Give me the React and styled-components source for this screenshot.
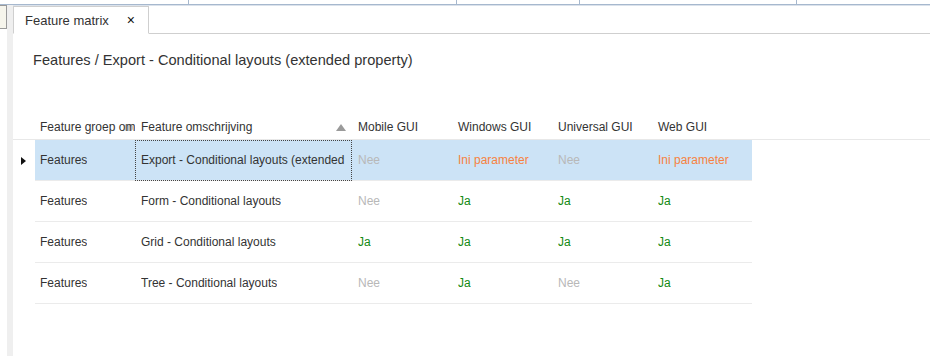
import styled, { createGlobalStyle } from 'styled-components';

const GlobalStyle = createGlobalStyle`
  body {
    margin: 0;
    background: #fff;
    font-family: "Liberation Sans", Arial, sans-serif;
    color: #333;
  }
`;

const Page = styled.div`
  width: 930px;
  height: 356px;
  overflow: hidden;
  display: flex;
  flex-direction: column;
`;

const TopStrip = styled.div`
  height: 4px;
  display: flex;
  border-bottom: 1px solid #a6b8ce;
  box-shadow: 0 1px 0 #dbe2eb;
`;

const StripSegment = styled.div`
  width: ${(props) => props.w}px;
  border-right: 1px solid #a6b8ce;
  flex: none;
`;

const Body = styled.div`
  flex: 1;
  display: flex;
  min-height: 0;
`;

const Gutter = styled.div`
  width: 7px;
  flex: none;
`;

const SideStub = styled.div`
  height: 24px;
  box-sizing: border-box;
  border: 1px solid #9a9a9a;
  border-left: none;
  background: #f6f5ec;
`;

const GreyRail = styled.div`
  width: 6px;
  flex: none;
  background: #efefef;
`;

const Content = styled.div`
  flex: 1;
  display: flex;
  flex-direction: column;
  min-width: 0;
`;

const TabBar = styled.div`
  height: 29px;
  display: flex;
  align-items: flex-end;
  border-bottom: 1px solid #cfcfcf;
  box-sizing: border-box;
  padding-top: 2px;
`;

const Tab = styled.div`
  height: 28px;
  box-sizing: border-box;
  width: 136px;
  margin-bottom: -1px;
  border: 1px solid #cfcfcf;
  border-bottom: 1px solid #fff;
  background: #fff;
  display: flex;
  align-items: center;
  padding-left: 11px;
  font-size: 13px;
  color: #333;
`;

const Close = styled.span`
  margin-left: 18px;
  font-size: 14px;
  color: #111;
`;

const Title = styled.h1`
  margin: 17px 0 0 20px;
  font-size: 14.6px;
  line-height: 18px;
  font-weight: normal;
  color: #333;
`;

const Grid = styled.div`
  margin-top: 46px;
  display: grid;
  grid-template-columns: 22px 100px 217px 100px 100px 100px 100px 1fr;
  font-size: 12px;
`;

const HeadCell = styled.div`
  position: relative;
  height: 24px;
  line-height: 24px;
  padding-left: ${(props) => (props.pad ? props.pad : 6)}px;
  border-bottom: 1px solid #e8e8e8;
  white-space: nowrap;
  overflow: hidden;
  color: #333;
`;

const ResizeMark = styled.span`
  position: absolute;
  right: 2px;
  top: 9px;
  width: 9px;
  height: 7px;
  border-radius: 3px;
  background: rgba(90, 90, 90, 0.35);
`;

const SortArrow = styled.span`
  position: absolute;
  right: 6px;
  top: 9px;
  width: 0;
  height: 0;
  border-left: 5px solid transparent;
  border-right: 5px solid transparent;
  border-bottom: 7px solid #9a9a9a;
`;

const Indicator = styled.div`
  height: 41px;
  display: flex;
  align-items: center;
  padding-left: 8px;
`;

const Filler = styled.div`
  height: 41px;
`;

const Cell = styled.div`
  height: 41px;
  box-sizing: border-box;
  display: flex;
  align-items: center;
  padding: 0 6px 0 ${(props) => (props.pad ? props.pad : 6)}px;
  border-bottom: 1px solid #ebebeb;
  background: ${(props) => (props.selected ? '#cce3f6' : '#fff')};
  outline: ${(props) => (props.focus ? '1px dotted #444' : 'none')};
  outline-offset: -1px;
  min-width: 0;
  color: ${(props) =>
    props.kind === 'Ja'
      ? '#138a13'
      : props.kind === 'Nee'
      ? '#b8b8b8'
      : props.kind === 'Ini parameter'
      ? '#f7823f'
      : '#333'};
`;

const CellText = styled.span`
  white-space: nowrap;
  overflow: hidden;
  min-width: 0;
`;

const columns = ['Mobile GUI', 'Windows GUI', 'Universal GUI', 'Web GUI'];

const rows = [
  { group: 'Features', name: 'Export - Conditional layouts (extended property)', values: ['Nee', 'Ini parameter', 'Nee', 'Ini parameter'], selected: true },
  { group: 'Features', name: 'Form - Conditional layouts', values: ['Nee', 'Ja', 'Ja', 'Ja'] },
  { group: 'Features', name: 'Grid - Conditional layouts', values: ['Ja', 'Ja', 'Ja', 'Ja'] },
  { group: 'Features', name: 'Tree - Conditional layouts', values: ['Nee', 'Ja', 'Nee', 'Ja'] },
];

const App = () => {
  return (
    <Page>
      <GlobalStyle />
      <TopStrip>
        <StripSegment w={188} />
        <StripSegment w={267} />
        <StripSegment w={122} />
        <StripSegment w={216} />
      </TopStrip>
      <Body>
        <Gutter>
          <SideStub />
        </Gutter>
        <GreyRail />
        <Content>
          <TabBar>
            <Tab>
              Feature matrix<Close>×</Close>
            </Tab>
          </TabBar>
          <Title>Features / Export - Conditional layouts (extended property)</Title>
          <Grid>
            <HeadCell />
            <HeadCell pad={5}>
              Feature groep omschrijving
              <ResizeMark />
            </HeadCell>
            <HeadCell>
              Feature omschrijving
              <SortArrow />
            </HeadCell>
            {columns.map((c) => (
              <HeadCell key={c}>{c}</HeadCell>
            ))}
            <HeadCell />

            {rows.map((r) => (
              <>
                <Indicator key={r.name + 'i'}>
                  {r.selected && (
                    <svg width="5" height="8" viewBox="0 0 5 8">
                      <path d="M0 0 L5 4 L0 8 Z" fill="#111" />
                    </svg>
                  )}
                </Indicator>
                <Cell pad={5} selected={r.selected}>
                  <CellText>{r.group}</CellText>
                </Cell>
                <Cell selected={r.selected} focus={r.selected}>
                  <CellText>{r.name}</CellText>
                </Cell>
                {r.values.map((v, i) => (
                  <Cell key={i} kind={v} selected={r.selected}>
                    <CellText>{v}</CellText>
                  </Cell>
                ))}
                <Filler />
              </>
            ))}
          </Grid>
        </Content>
      </Body>
    </Page>
  );
};

export default App;
